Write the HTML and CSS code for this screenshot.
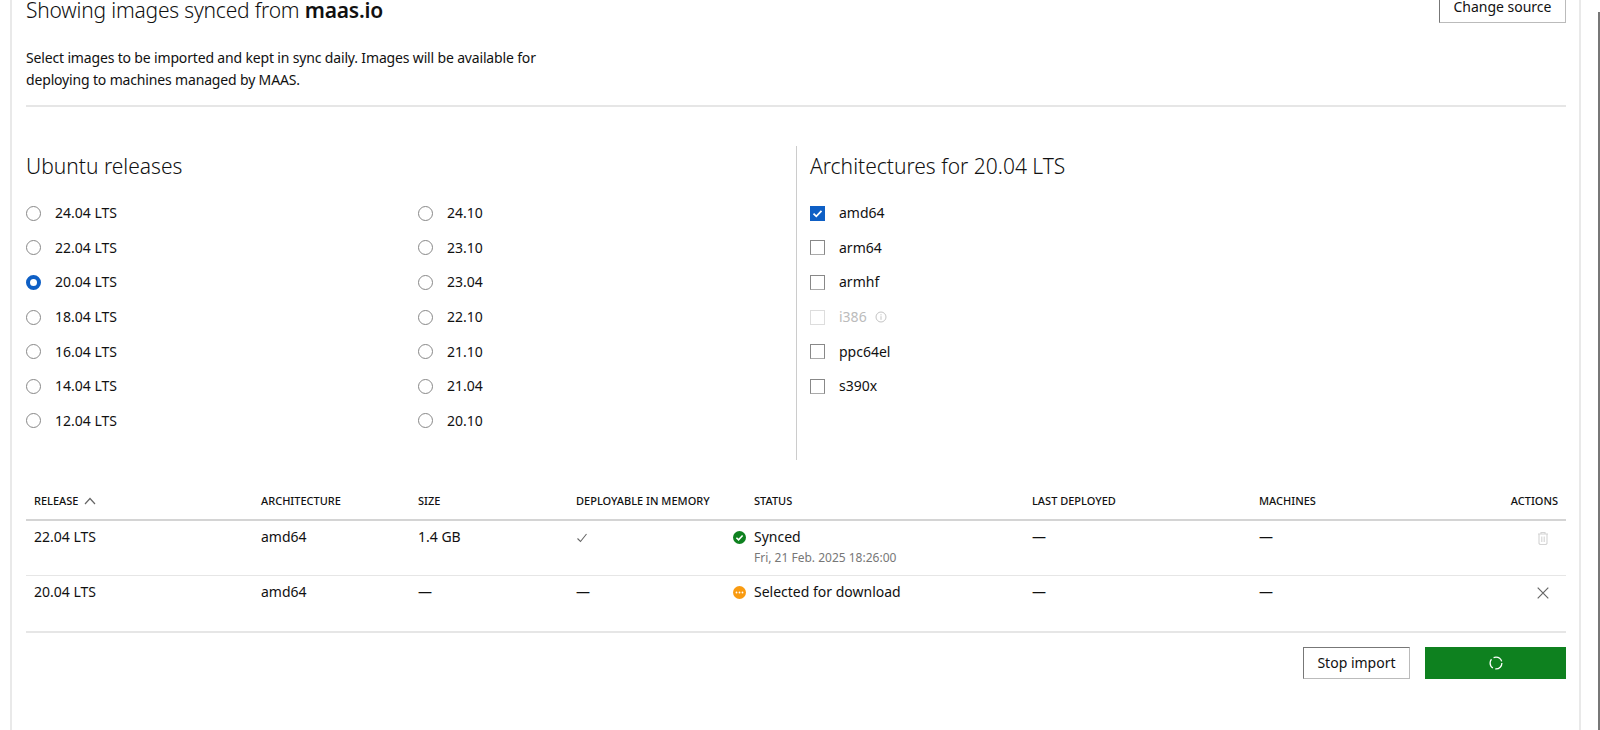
FILE: index.html
```html
<!DOCTYPE html>
<html lang="en">
<head>
    <meta charset="UTF-8">
    <title>MAAS images</title>
    <link rel="stylesheet" href="styles.css">
</head>
<body>
    <div class="panel">
        <div class="source-head">
            <div class="source-info">
                <h2 class="source-title">Showing images synced from <strong>maas.io</strong></h2>
                <p class="source-text">Select images to be imported and kept in sync daily. Images will be available for deploying to machines managed by MAAS.</p>
            </div>
            <button class="btn">Change source</button>
        </div>
        <hr class="rule">

        <div class="pickers">
            <div class="releases">
                <h3 class="pick-title">Ubuntu releases</h3>
                <div class="release-grid">
                    <label class="opt"><span class="radio"></span>24.04 LTS</label>
                    <label class="opt"><span class="radio"></span>24.10</label>
                    <label class="opt"><span class="radio"></span>22.04 LTS</label>
                    <label class="opt"><span class="radio"></span>23.10</label>
                    <label class="opt"><span class="radio checked"></span>20.04 LTS</label>
                    <label class="opt"><span class="radio"></span>23.04</label>
                    <label class="opt"><span class="radio"></span>18.04 LTS</label>
                    <label class="opt"><span class="radio"></span>22.10</label>
                    <label class="opt"><span class="radio"></span>16.04 LTS</label>
                    <label class="opt"><span class="radio"></span>21.10</label>
                    <label class="opt"><span class="radio"></span>14.04 LTS</label>
                    <label class="opt"><span class="radio"></span>21.04</label>
                    <label class="opt"><span class="radio"></span>12.04 LTS</label>
                    <label class="opt"><span class="radio"></span>20.10</label>
                </div>
            </div>
            <div class="arches">
                <h3 class="pick-title">Architectures for 20.04 LTS</h3>
                <label class="opt"><span class="check checked"><svg viewBox="0 0 15 15" width="15" height="15"><path d="M3.5 7.6l2.8 2.7 5.2-5.4" fill="none" stroke="#fff" stroke-width="1.8"/></svg></span>amd64</label>
                <label class="opt"><span class="check"></span>arm64</label>
                <label class="opt"><span class="check"></span>armhf</label>
                <label class="opt disabled"><span class="check"></span>i386<svg class="info" viewBox="0 0 12 12" width="12" height="12"><circle cx="6" cy="6" r="5" fill="none" stroke="#c4c4c4"/><path d="M6 5.2v3.6M6 3.2v1.2" stroke="#c4c4c4"/></svg></label>
                <label class="opt"><span class="check"></span>ppc64el</label>
                <label class="opt"><span class="check"></span>s390x</label>
            </div>
        </div>

        <table class="images">
            <thead>
                <tr>
                    <th class="col-release">Release <svg class="sort" viewBox="0 0 12 8" width="12" height="8"><path d="M1 7l5-5.5L11 7" fill="none" stroke="#666" stroke-width="1.2"/></svg></th>
                    <th class="col-arch">Architecture</th>
                    <th class="col-size">Size</th>
                    <th class="col-memory">Deployable in memory</th>
                    <th class="col-status">Status</th>
                    <th class="col-deployed">Last deployed</th>
                    <th class="col-machines">Machines</th>
                    <th class="col-actions">Actions</th>
                </tr>
            </thead>
            <tbody>
                <tr>
                    <td>22.04 LTS</td>
                    <td>amd64</td>
                    <td>1.4 GB</td>
                    <td><svg class="tick" viewBox="0 0 12 12" width="12" height="12"><path d="M1.5 6.5l3 3 6-7.5" fill="none" stroke="#666" stroke-width="1.1"/></svg></td>
                    <td class="status-cell">
                        <svg class="status-icon" viewBox="0 0 13 13" width="13" height="13"><circle cx="6.5" cy="6.5" r="6.5" fill="#0e811f"/><path d="M3.4 6.7l2.2 2.2 4-4.4" fill="none" stroke="#fff" stroke-width="1.6"/></svg>
                        Synced
                        <small class="status-date">Fri, 21 Feb. 2025 18:26:00</small>
                    </td>
                    <td>—</td>
                    <td>—</td>
                    <td class="col-actions">
                        <svg viewBox="0 0 12 14" width="12" height="14"><path d="M1 3h10M4 3V1.5h4V3M2 3v9.5l1 1h6l1-1V3M4.8 5.5v5.5M7.2 5.5v5.5" fill="none" stroke="#d4d4d4" stroke-width="1.1"/></svg>
                    </td>
                </tr>
                <tr>
                    <td>20.04 LTS</td>
                    <td>amd64</td>
                    <td>—</td>
                    <td>—</td>
                    <td class="status-cell">
                        <svg class="status-icon" viewBox="0 0 13 13" width="13" height="13"><circle cx="6.5" cy="6.5" r="6.5" fill="#f99b11"/><circle cx="3.5" cy="6.5" r=".9" fill="#fff"/><circle cx="6.5" cy="6.5" r=".9" fill="#fff"/><circle cx="9.5" cy="6.5" r=".9" fill="#fff"/></svg>
                        Selected for download
                    </td>
                    <td>—</td>
                    <td>—</td>
                    <td class="col-actions">
                        <svg viewBox="0 0 12 12" width="12" height="12"><path d="M.7.7l10.6 10.6M11.3.7L.7 11.3" fill="none" stroke="#666" stroke-width="1.2"/></svg>
                    </td>
                </tr>
            </tbody>
        </table>

        <div class="import-actions">
            <button class="btn">Stop import</button>
            <button class="btn btn-green"><svg viewBox="0 0 14 14" width="14" height="14"><circle cx="7" cy="7" r="5.9" fill="none" stroke="#fff" stroke-width="1.3" stroke-dasharray="9.8 2.5"/></svg></button>
        </div>
    </div>
    <div class="scroll-edge"></div>
</body>
</html>
```

FILE: styles.css
```css
html, body {
    height: 100%;
    overflow: hidden;
}
body {
    margin: 0;
    background: #fff;
    color: #111;
    font-family: "Noto Sans", Arial, sans-serif;
    font-size: 14px;
    line-height: 22px;
    display: flex;
}
.panel {
    box-sizing: border-box;
    width: 1571px;
    height: 739px;
    margin: -9px 0 0 10px;
    padding: 0 13px 0 14px;
    border-left: 2px solid #e9e9e9;
    border-right: 2px solid #e9e9e9;
    flex: none;
}
.scroll-edge {
    width: 2px;
    height: 718px;
    margin: 12px 0 0 17px;
    background: #777;
    flex: none;
}
.source-head {
    display: flex;
    justify-content: space-between;
    align-items: flex-start;
    height: 114px;
}
.source-info {
    padding-top: 9px;
}
.source-title {
    margin: 0;
    font-size: 21px;
    line-height: 21px;
    font-weight: 300;
    letter-spacing: -0.2px;
}
.source-title strong {
    font-weight: 600;
}
.source-text {
    width: 530px;
    margin: 26px 0 0;
    letter-spacing: -0.16px;
}
.btn {
    box-sizing: border-box;
    height: 32px;
    padding: 0 13.5px;
    background: #fff;
    border: 1px solid #777;
    border-bottom-color: #bbb;
    border-right-color: #bbb;
    color: #111;
    font: inherit;
}
.rule {
    margin: 0;
    border: 0;
    border-top: 2px solid #e6e6e6;
}
.pickers {
    display: flex;
    margin-top: 39px;
    height: 314px;
}
.releases {
    width: 770px;
    flex: none;
    border-right: 1px solid #ccc;
}
.arches {
    padding-left: 13px;
}
.pick-title {
    margin: 2px 0 12px;
    font-size: 21px;
    line-height: 36px;
    font-weight: 300;
}
.release-grid {
    display: grid;
    grid-template-columns: 392px 1fr;
}
.opt {
    display: flex;
    align-items: center;
    height: 34.6px;
}
.opt.disabled {
    color: #bbb;
}
.radio {
    box-sizing: border-box;
    width: 15px;
    height: 15px;
    margin-right: 14px;
    border: 1px solid #888;
    border-radius: 50%;
    flex: none;
}
.radio.checked {
    border: 4px solid #0e5fc5;
}
.check {
    box-sizing: border-box;
    width: 15px;
    height: 15px;
    margin-right: 14px;
    border: 1px solid #888;
    border-bottom-color: #aaa;
    flex: none;
}
.check svg {
    display: block;
    margin: -1px;
}
.check.checked {
    background: #0e5fc5;
    border-color: #0e5fc5;
}
.disabled .check {
    border-color: #ddd;
}
.info {
    margin-left: 8px;
}
.images {
    width: 1540px;
    margin-top: 22px;
    border-collapse: collapse;
    table-layout: fixed;
}
.images th {
    box-sizing: border-box;
    height: 38px;
    padding: 0 8px;
    font-size: 11px;
    font-weight: 500;
    text-align: left;
    text-transform: uppercase;
    border-bottom: 2px solid #d4d4d4;
}
.images td {
    padding: 5px 8px 8px;
    vertical-align: top;
    border-bottom: 1px solid #e6e6e6;
}
.images tbody tr:last-child td {
    border-bottom-width: 2px;
    height: 42px;
}
.sort {
    margin-left: 3px;
}
.col-release { width: 227px; }
.col-arch { width: 157px; }
.col-size { width: 158px; }
.col-memory { width: 178px; }
.col-status { width: 278px; }
.col-deployed { width: 227px; }
.col-machines { width: 215px; }
.images .col-actions {
    width: 100px;
    text-align: right;
}
.images td.col-actions {
    padding-right: 17px;
}
.images td svg {
    vertical-align: middle;
}
.status-cell {
    position: relative;
}
.status-icon {
    position: absolute;
    left: -13px;
    top: 10px;
}
.status-date {
    display: block;
    margin-top: 1px;
    font-size: 12px;
    line-height: 18px;
    color: #777;
}
.import-actions {
    display: flex;
    justify-content: flex-end;
    gap: 15px;
    margin-top: 14px;
}
.btn-green {
    width: 141px;
    background: #0e811f;
    border: 0;
    display: flex;
    align-items: center;
    justify-content: center;
}
```
